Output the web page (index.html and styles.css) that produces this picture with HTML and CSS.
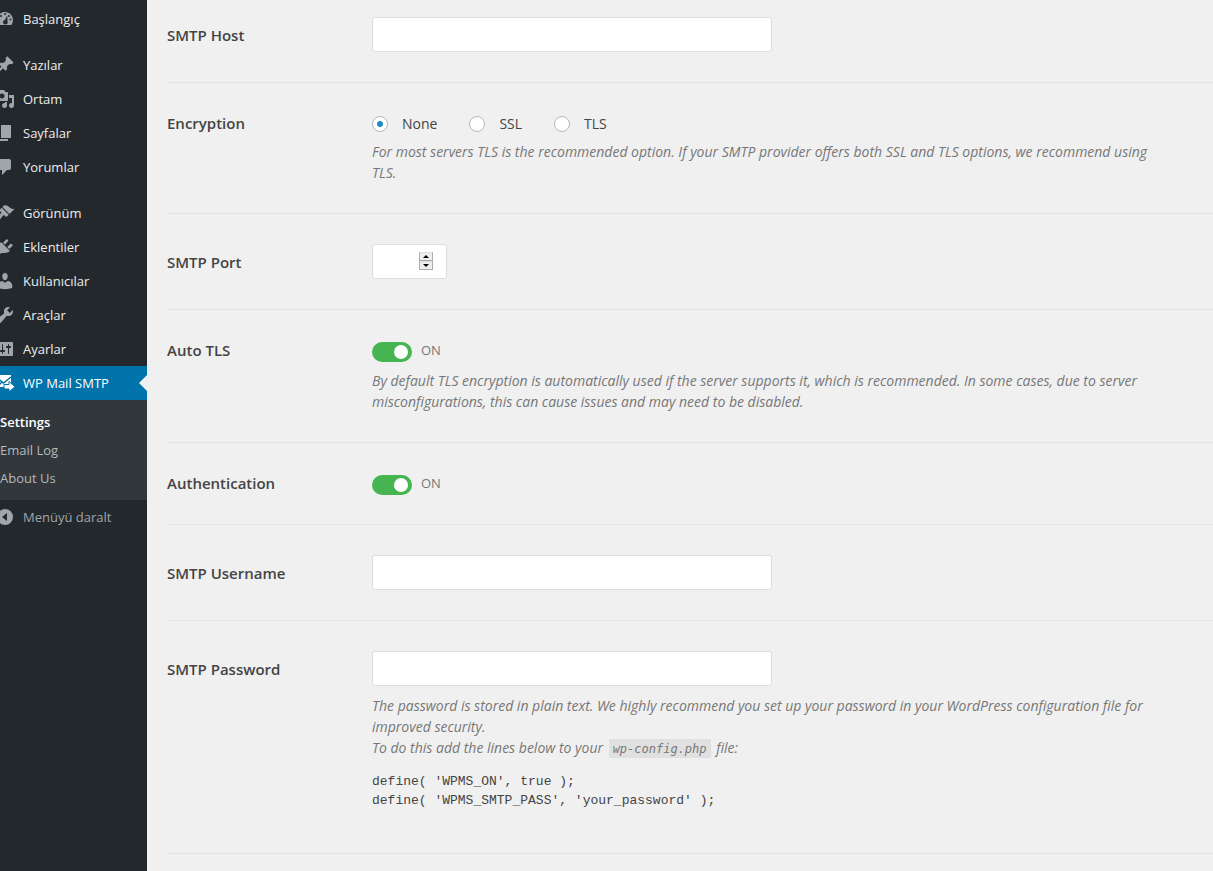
FILE: index.html
```html
<!DOCTYPE html>
<html lang="tr">
<head>
<meta charset="utf-8">
<title>WP Mail SMTP</title>
<link rel="stylesheet" href="styles.css">
</head>
<body>
<div class="layout">
  <nav class="sidebar">
    <ul class="menu">
      <li><a class="item" href="#"><svg class="icon" viewBox="5 0 15 20"><path fill-rule="evenodd" d="M3.76 16h12.48c1.1-1.37 1.76-3.11 1.76-5 0-4.42-3.58-8-8-8s-8 3.58-8 8c0 1.89.66 3.63 1.76 5zM10 4a1 1 0 1 1 0 2a1 1 0 1 1 0-2zM6 6a1 1 0 1 1 0 2a1 1 0 1 1 0-2zM14 6a1 1 0 1 1 0 2a1 1 0 1 1 0-2zM15.500 9.500a1 1 0 1 1 0 2a1 1 0 1 1 0-2zM12.300 6.500l.2 6a2.300 2.300 0 1 1-2.600-1.500z"/></svg>Başlangıç</a></li>
      <li class="group-start"><a class="item" href="#"><svg class="icon" viewBox="5 0 15 20"><path d="M10.440 3.020l1.820-1.820 6.360 6.350-1.830 1.820c-1.050-.68-2.480-.57-3.410.36l-.75.75c-.92.93-1.040 2.350-.35 3.410l-1.830 1.820-2.410-2.410-2.800 2.790c-.42.42-3.380 2.710-3.800 2.290s1.860-3.390 2.280-3.810l2.790-2.790L4.100 9.360l1.830-1.820c1.050.69 2.480.57 3.400-.36l.75-.75c.93-.92 1.050-2.350.36-3.410z"/></svg>Yazılar</a></li>
      <li><a class="item" href="#"><svg class="icon" viewBox="5 0 15 20"><path d="M13 11V4c0-.55-.45-1-1-1h-1.670L9 1H5L3.670 3H2c-.55 0-1 .45-1 1v7c0 .55.45 1 1 1h10c.55 0 1-.45 1-1zM7 4.500c1.380 0 2.500 1.120 2.500 2.500S8.380 9.500 7 9.500 4.500 8.380 4.500 7 5.620 4.500 7 4.500zM14 6h5v10.500c0 1.380-1.120 2.500-2.500 2.500S14 17.880 14 16.500s1.120-2.500 2.500-2.500c.17 0 .34.02.5.05V9h-3V6zm-4 8.050V13h2v3.500c0 1.380-1.120 2.500-2.500 2.500S7 17.880 7 16.500 8.120 14 9.500 14c.17 0 .34.02.5.05z"/></svg>Ortam</a></li>
      <li><a class="item" href="#"><svg class="icon" viewBox="5 0 15 20"><path d="M6 15V2h10v13H6zm-1 1h8v2H3V5h2v11z"/></svg>Sayfalar</a></li>
      <li><a class="item" href="#"><svg class="icon" viewBox="5 0 15 20"><path d="M5 2h9c1.100 0 2 .9 2 2v7c0 1.100-.9 2-2 2h-2l-5 5v-5H5c-1.100 0-2-.9-2-2V4c0-1.100.9-2 2-2z"/></svg>Yorumlar</a></li>
      <li class="group-start"><a class="item" href="#"><svg class="icon" viewBox="5 0 15 20"><path d="M14.480 11.060L7.410 3.990l1.500-1.500c.5-.56 2.300-.47 3.510.32 1.210.8 1.430 1.280 2.910 2.100 1.180.64 2.450 1.260 4.450.85zm-.71.71L6.700 4.700 4.930 6.470c-.39.39-.39 1.020 0 1.410l1.060 1.060c.39.39.39 1.030 0 1.420-.6.6-1.430 1.110-2.210 1.690-.35.26-.7.53-1.010.84C1.430 14.230.4 16.080 1.400 17.070c.99 1 2.840-.03 4.180-1.360.31-.31.58-.66.85-1.020.57-.78 1.080-1.610 1.690-2.210.39-.39 1.020-.39 1.410 0l1.060 1.060c.39.39 1.020.39 1.410 0z"/></svg>Görünüm</a></li>
      <li><a class="item" href="#"><svg class="icon" viewBox="5 0 15 20"><path d="M13.110 4.360L9.870 7.600 8 5.730l3.240-3.240c.35-.34 1.050-.2 1.560.32.52.51.66 1.210.31 1.550zm-8 1.770l.91-1.120 9.010 9.010-1.190.84c-.71.71-2.630 1.160-3.820 1.160H6.140L4.900 17.260c-.59.59-1.540.59-2.120 0-.59-.58-.59-1.530 0-2.120l1.240-1.240v-3.880c0-1.130.4-3.190 1.090-3.890zm7.260 3.970l3.240-3.240c.34-.35 1.040-.21 1.550.31.52.51.66 1.210.31 1.550l-3.240 3.250z"/></svg>Eklentiler</a></li>
      <li><a class="item" href="#"><svg class="icon" viewBox="5 0 15 20"><path d="M10 9.250c-2.270 0-2.730-3.440-2.730-3.440C7 4.020 7.820 2 9.970 2c2.160 0 2.980 2.020 2.710 3.810 0 0-.41 3.440-2.680 3.440zm0 2.570L12.720 10c2.390 0 4.520 2.330 4.520 4.530v2.490s-3.650 1.130-7.240 1.130c-3.650 0-7.240-1.130-7.240-1.130v-2.490c0-2.250 1.940-4.480 4.470-4.480z"/></svg>Kullanıcılar</a></li>
      <li><a class="item" href="#"><svg class="icon" viewBox="5 0 15 20"><path d="M16.680 9.770c-1.340 1.340-3.300 1.670-4.950.99l-5.410 6.520c-.99.99-2.590.99-3.580 0s-.99-2.590 0-3.570l6.520-5.420c-.68-1.650-.35-3.610.99-4.950 1.280-1.280 3.120-1.620 4.720-1.060l-2.890 2.890 2.820 2.820 2.860-2.870c.53 1.580.18 3.390-1.080 4.650z"/></svg>Araçlar</a></li>
      <li><a class="item" href="#"><svg class="icon" viewBox="5 0 15 20"><path d="M18 16V4c0-.55-.45-1-1-1H3c-.55 0-1 .45-1 1v12c0 .55.45 1 1 1h14c.55 0 1-.45 1-1zM8 11h1c.55 0 1 .45 1 1s-.45 1-1 1H8v1.500c0 .28-.22.5-.5.5s-.5-.22-.5-.5V13H6c-.55 0-1-.45-1-1s.45-1 1-1h1V5.500c0-.28.22-.5.5-.5s.5.22.5.5V11zm5-2h-1c-.55 0-1-.45-1-1s.45-1 1-1h1V5.500c0-.28.22-.5.5-.5s.5.22.5.5V7h1c.55 0 1 .45 1 1s-.45 1-1 1h-1v5.500c0 .28-.22.5-.5.5s-.5-.22-.5-.5V9z"/></svg>Ayarlar</a></li>
      <li>
        <a class="item current" href="#"><svg class="icon" viewBox="5 0 15 20"><path d="M1 2h15v12H1z"/><path class="envelope-line" d="M1 4l7.500 6L16 4M2 14l5-5"/><path class="arrow" d="M9 11.500h5V8.500l6 5.200-6 5.300v-3H9z"/></svg>WP Mail SMTP</a>
        <ul class="submenu">
          <li><a class="active" href="#">Settings</a></li>
          <li><a href="#">Email Log</a></li>
          <li><a href="#">About Us</a></li>
        </ul>
      </li>
    </ul>
    <button class="item collapse" type="button"><svg class="icon" viewBox="5 0 15 20"><path fill-rule="evenodd" d="M10 2a8 8 0 1 1 0 16a8 8 0 1 1 0-16zM12 6l-5 4 5 4z"/></svg>Menüyü daralt</button>
  </nav>

  <main class="content">
    <form>
      <div class="row first">
        <label class="label" for="host">SMTP Host</label>
        <div class="field"><input class="text" id="host" type="text"></div>
      </div>
      <div class="row" role="radiogroup" aria-labelledby="enc">
        <span class="label plain" id="enc">Encryption</span>
        <div class="field">
          <div class="radios">
            <label class="choice"><input type="radio" name="encryption" checked>None</label>
            <label class="choice"><input type="radio" name="encryption">SSL</label>
            <label class="choice"><input type="radio" name="encryption">TLS</label>
          </div>
          <p class="desc">For most servers TLS is the recommended option. If your SMTP provider offers both SSL and TLS options, we recommend using TLS.</p>
        </div>
      </div>
      <div class="row">
        <label class="label" for="port">SMTP Port</label>
        <div class="field">
          <div class="number">
            <input class="text" id="port" type="number">
            <div class="spinner">
              <button type="button" aria-label="+"><svg viewBox="0 0 6 3"><path d="M0 3l3-3 3 3z"/></svg></button>
              <button type="button" aria-label="-"><svg viewBox="0 0 6 3"><path d="M0 0l3 3 3-3z"/></svg></button>
            </div>
          </div>
        </div>
      </div>
      <div class="row">
        <label class="label plain" for="autotls">Auto TLS</label>
        <div class="field">
          <div class="switch"><input class="toggle" id="autotls" type="checkbox" checked><span>ON</span></div>
          <p class="desc spaced">By default TLS encryption is automatically used if the server supports it, which is recommended. In some cases, due to server misconfigurations, this can cause issues and may need to be disabled.</p>
        </div>
      </div>
      <div class="row">
        <label class="label plain" for="auth">Authentication</label>
        <div class="field">
          <div class="switch"><input class="toggle" id="auth" type="checkbox" checked><span>ON</span></div>
        </div>
      </div>
      <div class="row">
        <label class="label" for="user">SMTP Username</label>
        <div class="field"><input class="text" id="user" type="text"></div>
      </div>
      <div class="row">
        <label class="label" for="pass">SMTP Password</label>
        <div class="field">
          <input class="text" id="pass" type="password">
          <p class="desc spaced">The password is stored in plain text. We highly recommend you set up your password in your WordPress configuration file for improved security.<br>To do this add the lines below to your <code>wp-config.php</code> file:</p>
          <pre class="snippet">define( 'WPMS_ON', true );
define( 'WPMS_SMTP_PASS', 'your_password' );</pre>
        </div>
      </div>
    </form>
  </main>
</div>
</body>
</html>
```

FILE: styles.css
```css
* { box-sizing: border-box; }

body {
  margin: 0;
  background: #f0f0f0;
  color: #444;
  font: 14px/21px "Open Sans", "Noto Sans", sans-serif;
}

ul { list-style: none; margin: 0; padding: 0; }
p { margin: 0; }

.layout { display: flex; min-height: 100vh; }

.sidebar {
  flex: none;
  width: 147px;
  padding-top: 2px;
  background: #23282d;
  font-size: 13px;
}

.item {
  display: flex;
  align-items: center;
  gap: 8px;
  height: 34px;
  color: #eee;
  text-decoration: none;
}

.icon {
  flex: none;
  width: 15px;
  height: 20px;
  fill: #a0a5aa;
}

.group-start { margin-top: 12px; }

.current {
  position: relative;
  background: #0073aa;
  color: #fff;
}
.current .icon { fill: #fff; }
.current::after {
  content: "";
  position: absolute;
  right: 0;
  top: 9px;
  border: 8px solid transparent;
  border-left-width: 0;
  border-right-color: #f0f0f0;
}
.envelope-line { fill: none; stroke: #0073aa; stroke-width: 1.5; }
.arrow { stroke: #0073aa; stroke-width: 1; }

.submenu { padding: 8px 0; background: #32373c; }
.submenu a {
  display: block;
  line-height: 28px;
  color: #b4b9be;
  text-decoration: none;
}
.submenu .active { color: #fff; font-weight: 600; }

.collapse {
  width: 100%;
  padding: 0;
  border: 0;
  background: none;
  color: #a0a5aa;
  font: inherit;
}

.content { flex: 1; padding-left: 20px; }

.row {
  display: flex;
  padding: 30px 0;
  border-bottom: 1px solid #e4e4e4;
}
.first { padding-top: 17px; }

.label {
  flex: none;
  width: 205px;
  padding-top: 8px;
  font-size: 15px;
  font-weight: 600;
}
.plain { padding-top: 0; }

.field { flex: 1; padding-right: 40px; }

.text {
  display: block;
  width: 400px;
  height: 35px;
  padding: 0 8px;
  border: 1px solid #ddd;
  border-radius: 3px;
  background: #fff;
  font: inherit;
}

.number { position: relative; width: 75px; }
.number .text { width: 100%; appearance: textfield; }
.spinner {
  position: absolute;
  top: 8px;
  right: 14px;
  display: grid;
  width: 14px;
}
.spinner button {
  display: grid;
  place-items: center;
  height: 9px;
  padding: 0;
  border: 1px solid #aaa;
  border-top-color: #ddd;
  background: #eee;
}
.spinner svg { width: 6px; height: 3px; }

.radios { display: flex; gap: 32px; height: 28px; }
.choice { display: flex; gap: 14px; height: 21px; align-items: center; }
.choice input {
  appearance: none;
  display: grid;
  place-items: center;
  width: 16px;
  height: 16px;
  margin: 0;
  border: 1px solid #b4b9be;
  border-radius: 50%;
  background: #fff;
}
.choice input:checked::before {
  content: "";
  width: 6px;
  height: 6px;
  border-radius: 50%;
  background: #1e8cbe;
}

.switch {
  display: flex;
  align-items: center;
  gap: 9px;
  height: 21px;
  color: #777;
  font-size: 13px;
}
.toggle {
  appearance: none;
  display: flex;
  justify-content: flex-end;
  align-items: center;
  width: 40px;
  height: 20px;
  margin: 2px 0 0;
  padding: 0 4px;
  border-radius: 10px;
  background: #46b450;
}
.toggle::before {
  content: "";
  width: 14px;
  height: 14px;
  border-radius: 50%;
  background: #fff;
}

.desc { color: #777; font-style: italic; }
.spaced { margin-top: 9px; }

.desc code {
  margin: 0 2px;
  padding: 3px 4px 2px;
  background: #e0e0e0;
  font-family: "DejaVu Sans Mono", monospace;
  font-size: 12px;
  line-height: 16px;
}

.snippet {
  margin: 14px 0 13px;
  font: 13px/19px "Liberation Mono", monospace;
}
```
